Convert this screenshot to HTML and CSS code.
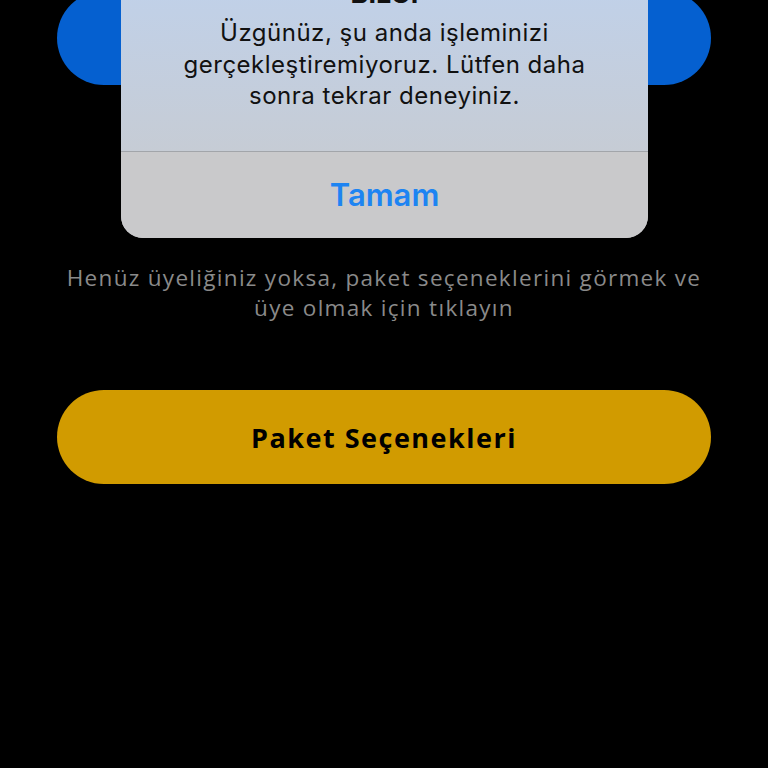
FILE: index.html
```html
<!DOCTYPE html>
<html lang="tr">
<head>
    <meta charset="UTF-8">
    <meta name="viewport" content="width=device-width, initial-scale=1.0">
    <title>Giriş</title>
    <link rel="stylesheet" href="styles.css">
</head>
<body>
    <div class="screen">
        <button class="pill pill-blue">Giriş Yap</button>
        <p class="hint">Henüz üyeliğiniz yoksa, paket seçeneklerini görmek ve<br>üye olmak için tıklayın</p>
        <button class="pill pill-gold">Paket Seçenekleri</button>

        <div class="alert">
            <div class="alert-body">
                <div class="alert-title">BİLGİ</div>
                <div class="alert-message">Üzgünüz, şu anda işleminizi<br>gerçekleştiremiyoruz. Lütfen daha<br>sonra tekrar deneyiniz.</div>
            </div>
            <button class="alert-action">Tamam</button>
        </div>
    </div>
</body>
</html>
```

FILE: styles.css
```css
html, body {
    margin: 0;
    background: #000;
}
body {
    font-family: "Open Sans", "Noto Sans", sans-serif;
    width: 768px;
    height: 768px;
    overflow: hidden;
}
.screen {
    position: relative;
    display: flex;
    flex-direction: column;
    padding: 0 57px;
}
.pill {
    height: 94px;
    border: none;
    border-radius: 47px;
    font-family: "Open Sans", "Noto Sans", sans-serif;
    font-size: 27px;
    font-weight: 700;
    letter-spacing: 1.5px;
    color: #000;
}
.pill-blue {
    margin-top: -9px;
    background: #0560d0;
    color: #fff;
}
.pill-gold {
    background: #d19b00;
}
.hint {
    margin: 178px 0 67px;
    color: #8a8a8a;
    font-size: 22.5px;
    font-weight: 500;
    line-height: 30px;
    letter-spacing: 1.3px;
    text-align: center;
    white-space: nowrap;
}
.alert {
    position: absolute;
    left: 121px;
    top: -22px;
    width: 527px;
    border-radius: 22px;
    overflow: hidden;
    background: #c9c9cb;
    font-family: Inter, "Noto Sans", sans-serif;
}
.alert-body {
    padding: 0 20px 39px;
    text-align: center;
    color: #111;
    background: linear-gradient(#c0d1ea, #c6ccd5);
    border-bottom: 1px solid #a2a5aa;
}
.alert-title {
    font-size: 27px;
    font-weight: 700;
    line-height: 32px;
    margin-bottom: 7px;
}
.alert-message {
    font-size: 24px;
    line-height: 31.5px;
    letter-spacing: 0.5px;
}
.alert-action {
    display: block;
    width: 100%;
    height: 86px;
    border: none;
    background: #c9c9cb;
    color: #1d84f2;
    font-family: Inter, "Noto Sans", sans-serif;
    font-size: 31px;
    font-weight: 600;
}
```
